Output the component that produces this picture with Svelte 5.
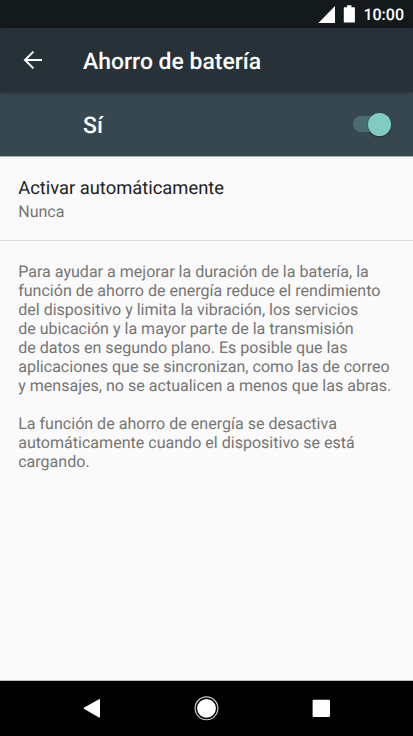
<script lang="ts">
	let enabled = $state(true);

	const description = [
		[
			'Para ayudar a mejorar la duración de la batería, la',
			'función de ahorro de energía reduce el rendimiento',
			'del dispositivo y limita la vibración, los servicios',
			'de ubicación y la mayor parte de la transmisión',
			'de datos en segundo plano. Es posible que las',
			'aplicaciones que se sincronizan, como las de correo',
			'y mensajes, no se actualicen a menos que las abras.'
		],
		[
			'La función de ahorro de energía se desactiva',
			'automáticamente cuando el dispositivo se está',
			'cargando.'
		]
	];
</script>

<div class="screen">
	<div class="status-bar">
		<svg class="signal" width="17" height="17" viewBox="0 0 17 17"><path d="M17 0v17H.4z" /></svg>
		<svg class="battery" width="12" height="18" viewBox="0 0 12 18">
			<path d="M4 .2h4.4v2h2.9q.6 0 .6.6V17q0 .6-.6.6H1.4q-.6 0-.6-.6V2.8q0-.6.6-.6H4z" />
		</svg>
		<span class="clock">10:00</span>
	</div>

	<header>
		<button class="back" aria-label="Atrás">
			<svg width="20" height="20" viewBox="0 0 20 20">
				<path d="M19 10H2M10.4 1.6L2 10l8.4 8.4" />
			</svg>
		</button>
		<h1>Ahorro de batería</h1>
	</header>

	<div class="switch-bar">
		<span>{enabled ? 'Sí' : 'No'}</span>
		<button
			class="switch"
			class:on={enabled}
			role="switch"
			aria-checked={enabled}
			aria-label="Ahorro de batería"
			onclick={() => (enabled = !enabled)}
		>
			<i class="thumb"></i>
		</button>
	</div>

	<main>
		<div class="preference">
			<div class="title">Activar automáticamente</div>
			<div class="summary">Nunca</div>
		</div>
		<div class="description">
			{#each description as lines}
				<p>
					{#each lines as line}
						<span>{line}</span>
					{/each}
				</p>
			{/each}
		</div>
	</main>

	<nav>
		<button aria-label="Atrás">
			<svg width="24" height="26" viewBox="0 0 24 26">
				<path d="M20 4.2q1-.5 1 .6v17q0 1.1-1 .6L5.2 14.1q-1.2-.8 0-1.6z" />
			</svg>
		</button>
		<button aria-label="Inicio">
			<svg width="26" height="26" viewBox="0 0 26 26">
				<circle cx="13.5" cy="13.3" r="9.4" />
				<circle class="ring" cx="13.5" cy="13.3" r="11.4" />
			</svg>
		</button>
		<button aria-label="Recientes">
			<svg width="26" height="26" viewBox="0 0 26 26">
				<rect x="4.6" y="4.7" width="17.4" height="17.2" rx="1" />
			</svg>
		</button>
	</nav>
</div>

<style>
	:global(body) {
		margin: 0;
		font-family: Roboto, sans-serif;
		text-rendering: geometricPrecision;
		background: #fafafa;
	}
	.screen {
		height: 736px;
		display: flex;
		flex-direction: column;
		overflow: hidden;
	}
	button {
		padding: 0;
		border: 0;
		background: none;
		cursor: pointer;
	}
	svg {
		display: block;
		fill: #fff;
	}
	.status-bar {
		height: 28px;
		box-sizing: border-box;
		padding-right: 9px;
		display: flex;
		align-items: center;
		justify-content: flex-end;
		background: #14191c;
		color: #fff;
	}
	.signal {
		margin-right: 8px;
	}
	.battery {
		margin: -1px 8px 0 0;
	}
	.clock {
		font-size: 16px;
		font-weight: 500;
		line-height: 28px;
		margin-top: 1px;
	}
	header {
		height: 64px;
		display: flex;
		align-items: center;
		background: #263238;
		color: #fff;
		box-shadow: 0 1px 3px rgba(0, 0, 0, 0.35);
		z-index: 1;
	}
	.back {
		width: 83px;
		padding-left: 22.5px;
	}
	.back path {
		fill: none;
		stroke: #fff;
		stroke-width: 2;
	}
	h1 {
		margin: 2px 0 0;
		font-size: 22.95px;
		font-weight: 500;
	}
	.switch-bar {
		height: 64px;
		box-sizing: border-box;
		padding: 0 22px 0 83px;
		display: flex;
		align-items: center;
		justify-content: space-between;
		background: #37474f;
		color: #fff;
		font-size: 22.95px;
		font-weight: 500;
	}
	.switch-bar span {
		margin-top: 3px;
	}
	.switch {
		width: 38px;
		height: 16px;
		border-radius: 8px;
		display: flex;
		align-items: center;
		background: #68777d;
	}
	.switch.on {
		justify-content: flex-end;
		background: #4c6c70;
	}
	.thumb {
		width: 23px;
		height: 23px;
		border-radius: 50%;
		background: #b9c0c3;
		box-shadow: 0 1px 2px rgba(0, 0, 0, 0.35);
	}
	.on .thumb {
		background: #80cbc4;
	}
	main {
		flex: 1;
		border-top: 1px solid #a9b0b3;
		background: #fafafa;
	}
	.preference {
		height: 84px;
		box-sizing: border-box;
		padding: 20px 18px 0 18.2px;
		border-bottom: 1px solid #dcdcdc;
	}
	.title {
		font-size: 18.36px;
		line-height: 24px;
		color: #212121;
	}
	.summary {
		font-size: 16.06px;
		line-height: 22px;
		color: #757575;
	}
	.description {
		padding: 21px 18px 0 18.2px;
		font-size: 16.06px;
		line-height: 19px;
		color: #757575;
	}
	p {
		margin: 0 0 19px;
	}
	p span {
		display: block;
		white-space: nowrap;
	}
	nav {
		height: 54px;
		padding: 0 35px 1px 34px;
		display: flex;
		align-items: center;
		border-top: 1px solid #bcc4c1;
		background: #000;
	}
	nav button {
		flex: 1;
		display: flex;
		justify-content: center;
	}
	.ring {
		fill: none;
		stroke: #d0d0d0;
		stroke-width: 1.1;
	}
</style>
